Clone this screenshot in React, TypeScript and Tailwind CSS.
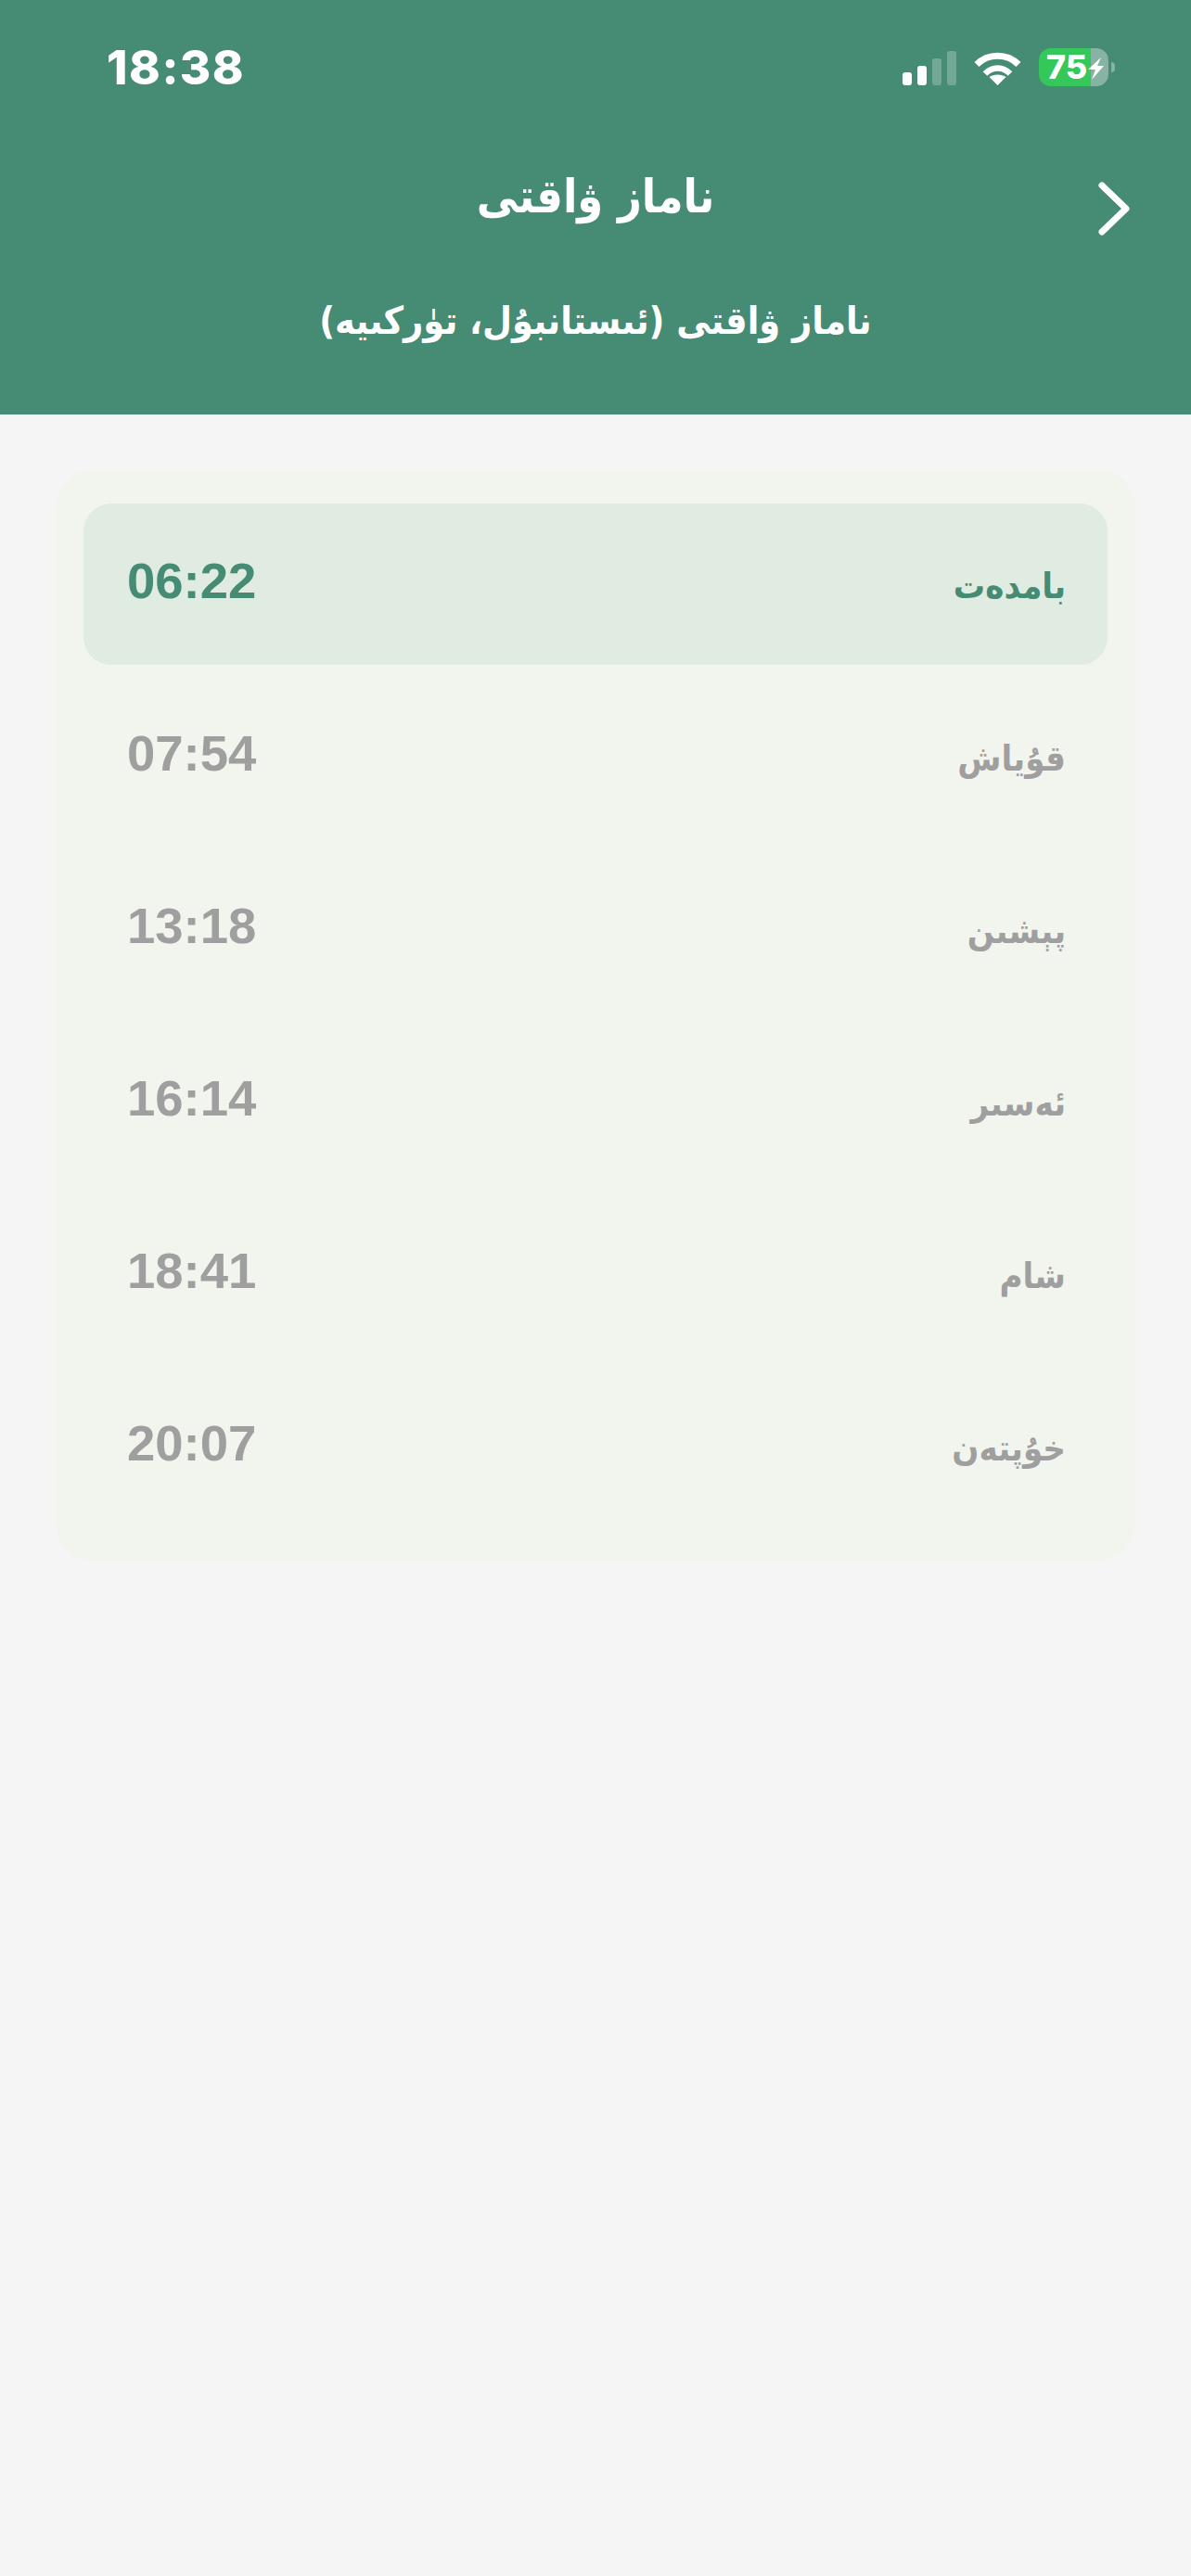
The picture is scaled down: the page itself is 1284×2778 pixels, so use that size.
const prayers = [
  { name: "بامدەت", time: "06:22", active: true },
  { name: "قۇياش", time: "07:54", active: false },
  { name: "پېشىن", time: "13:18", active: false },
  { name: "ئەسىر", time: "16:14", active: false },
  { name: "شام", time: "18:41", active: false },
  { name: "خۇپتەن", time: "20:07", active: false },
];

function StatusBar() {
  return (
    <div className="flex h-[144px] items-start justify-between pl-[115px] pr-[82px] pt-[52px] font-['Inter',sans-serif] text-white">
      <span className="text-[51px] leading-[41px] font-extrabold tracking-[1.5px]">18:38</span>
      <div className="flex items-center gap-[19px]">
        {/* signal */}
        <div className="flex items-end gap-[6px] pt-[2px]">
          <div className="h-[14px] w-[10px] rounded-[3px] bg-white" />
          <div className="h-[21px] w-[10px] rounded-[3px] bg-white" />
          <div className="h-[29px] w-[10px] rounded-[3px] bg-white/25" />
          <div className="h-[37px] w-[10px] rounded-[3px] bg-white/25" />
        </div>
        <svg width="51" height="37" viewBox="0 0 51 37" fill="none" className="mt-[2px]">
          <path d="M3 14.5C15 2 36 2 48 14.5" stroke="white" strokeWidth="7" />
          <path d="M12 24.5C20 16.5 31 16.5 39 24.5" stroke="white" strokeWidth="6.5" />
          <path d="M25.5 37L16.5 28C21 24.5 30 24.5 34.5 28Z" fill="white" />
        </svg>
        {/* battery */}
        <div className="flex items-center gap-[3px]">
          <div className="relative flex h-[41px] w-[75px]">
            <div className="w-[56px] rounded-l-[13px] bg-[#34c759]" />
            <div className="flex-1 rounded-r-[13px] bg-white/35" />
            <span className="absolute left-[8px] top-0 text-[36px] leading-[41px] font-extrabold">75</span>
            <svg width="75" height="41" viewBox="0 0 75 41" className="absolute left-0 top-0">
              <polygon points="67,10 53,23 61,23 57,34 70,19 63,19" fill="white" />
            </svg>
          </div>
          <div className="h-[11px] w-[4px] rounded-r-full bg-white/35" />
        </div>
      </div>
    </div>
  );
}

function App() {
  return (
    <div className="min-h-[2778px] bg-[#f5f5f5] font-['DejaVu_Sans_Condensed','DejaVu_Sans',sans-serif]">
      <header className="h-[447px] bg-[#468b73] text-white">
        <StatusBar />
        <div dir="rtl" className="grid h-[150px] grid-cols-[1fr_auto_1fr] items-center">
          <div className="flex justify-start pr-[66px] pt-[12px]">
            <svg width="34" height="58" viewBox="0 0 34 58" fill="none">
              <path d="M4 4L30 29L4 54" stroke="white" strokeWidth="7" strokeLinecap="round" strokeLinejoin="round" />
            </svg>
          </div>
          <h1 className="pb-[14px] text-[50px] font-bold leading-none">ناماز ۋاقتى</h1>
          <div />
        </div>
        <p dir="rtl" className="mt-[32px] text-center text-[41px] font-bold leading-none">
          ناماز ۋاقتى (ئىستانبۇل، تۈركىيە)
        </p>
      </header>

      <main className="px-[60px] pt-[60px]">
        <div dir="rtl" className="flex flex-col gap-[12px] rounded-[40px] bg-[#f2f5ed] px-[30px] py-[36px]">
          {prayers.map((p) => (
            <div
              key={p.name}
              className={`flex h-[174px] items-baseline justify-between rounded-[30px] pl-[47px] pr-[45px] pt-[53px] font-bold ${
                p.active ? "bg-[#e0ebe2] text-[#468b73]" : "text-[#9f9f9f]"
              }`}
            >
              <span className="text-[38px] leading-[62px]">{p.name}</span>
              <span dir="ltr" className="font-['Liberation_Sans',sans-serif] text-[54.5px] leading-[62px]">
                {p.time}
              </span>
            </div>
          ))}
        </div>
      </main>
    </div>
  );
}

export default App;
